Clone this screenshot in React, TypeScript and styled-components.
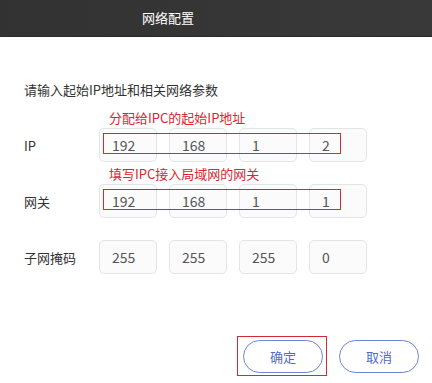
import React from "react"
import styled, { createGlobalStyle } from "styled-components"

const GlobalStyle = createGlobalStyle`
  body {
    margin: 0;
    background: #fff;
    font-family: "Noto Sans CJK SC", "Noto Sans", sans-serif;
  }
`

type Field = {
  label: string
  values: string[]
  hint?: string
}

const fields: Field[] = [
  { label: "IP", values: ["192", "168", "1", "2"], hint: "分配给IPC的起始IP地址" },
  { label: "网关", values: ["192", "168", "1", "1"], hint: "填写IPC接入局域网的网关" },
  { label: "子网掩码", values: ["255", "255", "255", "0"] },
]

const App = () => {
  return (
    <Dialog>
      <GlobalStyle />
      <Header>
        <Title>网络配置</Title>
      </Header>
      <Body>
        <Intro>请输入起始IP地址和相关网络参数</Intro>
        <Form>
          {fields.map((f) => (
            <Row key={f.label}>
              <Label>{f.label}</Label>
              <Boxes>
                {f.hint && <Hint>{f.hint}</Hint>}
                {f.values.map((v, i) => (
                  <Octet key={i}>{v}</Octet>
                ))}
                {f.hint && <Mark />}
              </Boxes>
            </Row>
          ))}
        </Form>
        <Footer>
          <Marked>
            <Button>确定</Button>
          </Marked>
          <Button>取消</Button>
        </Footer>
      </Body>
    </Dialog>
  )
}

export default App

const Dialog = styled.div`
  width: 432px;
  height: 383px;
  background: #fff;
`

const Header = styled.div`
  height: 37px;
  display: flex;
  align-items: center;
  padding-left: 142px;
  background: linear-gradient(90deg, #323232, #393939);
  border-bottom: 1px solid #2a2a2a;
  box-sizing: border-box;
`

const Title = styled.div`
  color: #fff;
  font-size: 13px;
  line-height: 16px;
`

const Body = styled.div`
  padding: 44px 0 0 24px;
`

const Intro = styled.div`
  font-size: 13px;
  line-height: 18px;
  color: #333;
`

const Form = styled.div`
  margin-top: 29px;
  display: flex;
  flex-direction: column;
  gap: 22px;
`

const Row = styled.div`
  display: flex;
  align-items: center;
  height: 34px;
`

const Label = styled.div`
  width: 75px;
  font-size: 13px;
  color: #333;
`

const Boxes = styled.div`
  position: relative;
  display: flex;
  gap: 12px;
`

const Octet = styled.div`
  width: 58px;
  height: 34px;
  box-sizing: border-box;
  border: 1px solid #e4e4e4;
  border-radius: 5px;
  background: #fbfbfb;
  padding-left: 12px;
  display: flex;
  align-items: center;
  font-size: 14px;
  color: #555;
`

const Hint = styled.div`
  position: absolute;
  left: 10px;
  bottom: 100%;
  margin-bottom: 1px;
  white-space: nowrap;
  font-size: 13px;
  line-height: 18px;
  color: #d9262f;
`

const Mark = styled.div`
  position: absolute;
  left: 4px;
  top: 5px;
  width: 238px;
  height: 21px;
  box-sizing: border-box;
  border: 1px solid #cf2a38;
`

const Footer = styled.div`
  margin-top: 66px;
  padding-right: 13px;
  display: flex;
  justify-content: flex-end;
  gap: 16px;
`

const Marked = styled.div`
  position: relative;
  display: flex;
  &::after {
    content: "";
    position: absolute;
    top: -4px;
    right: -4px;
    bottom: -3px;
    left: -6px;
    border: 1px solid #d02a36;
  }
`

const Button = styled.button`
  width: 80px;
  height: 33px;
  border-radius: 17px;
  border: 1px solid #6c84d2;
  background: #fff;
  color: #4f6bc6;
  font-family: inherit;
  font-size: 13px;
  padding: 0;
`
